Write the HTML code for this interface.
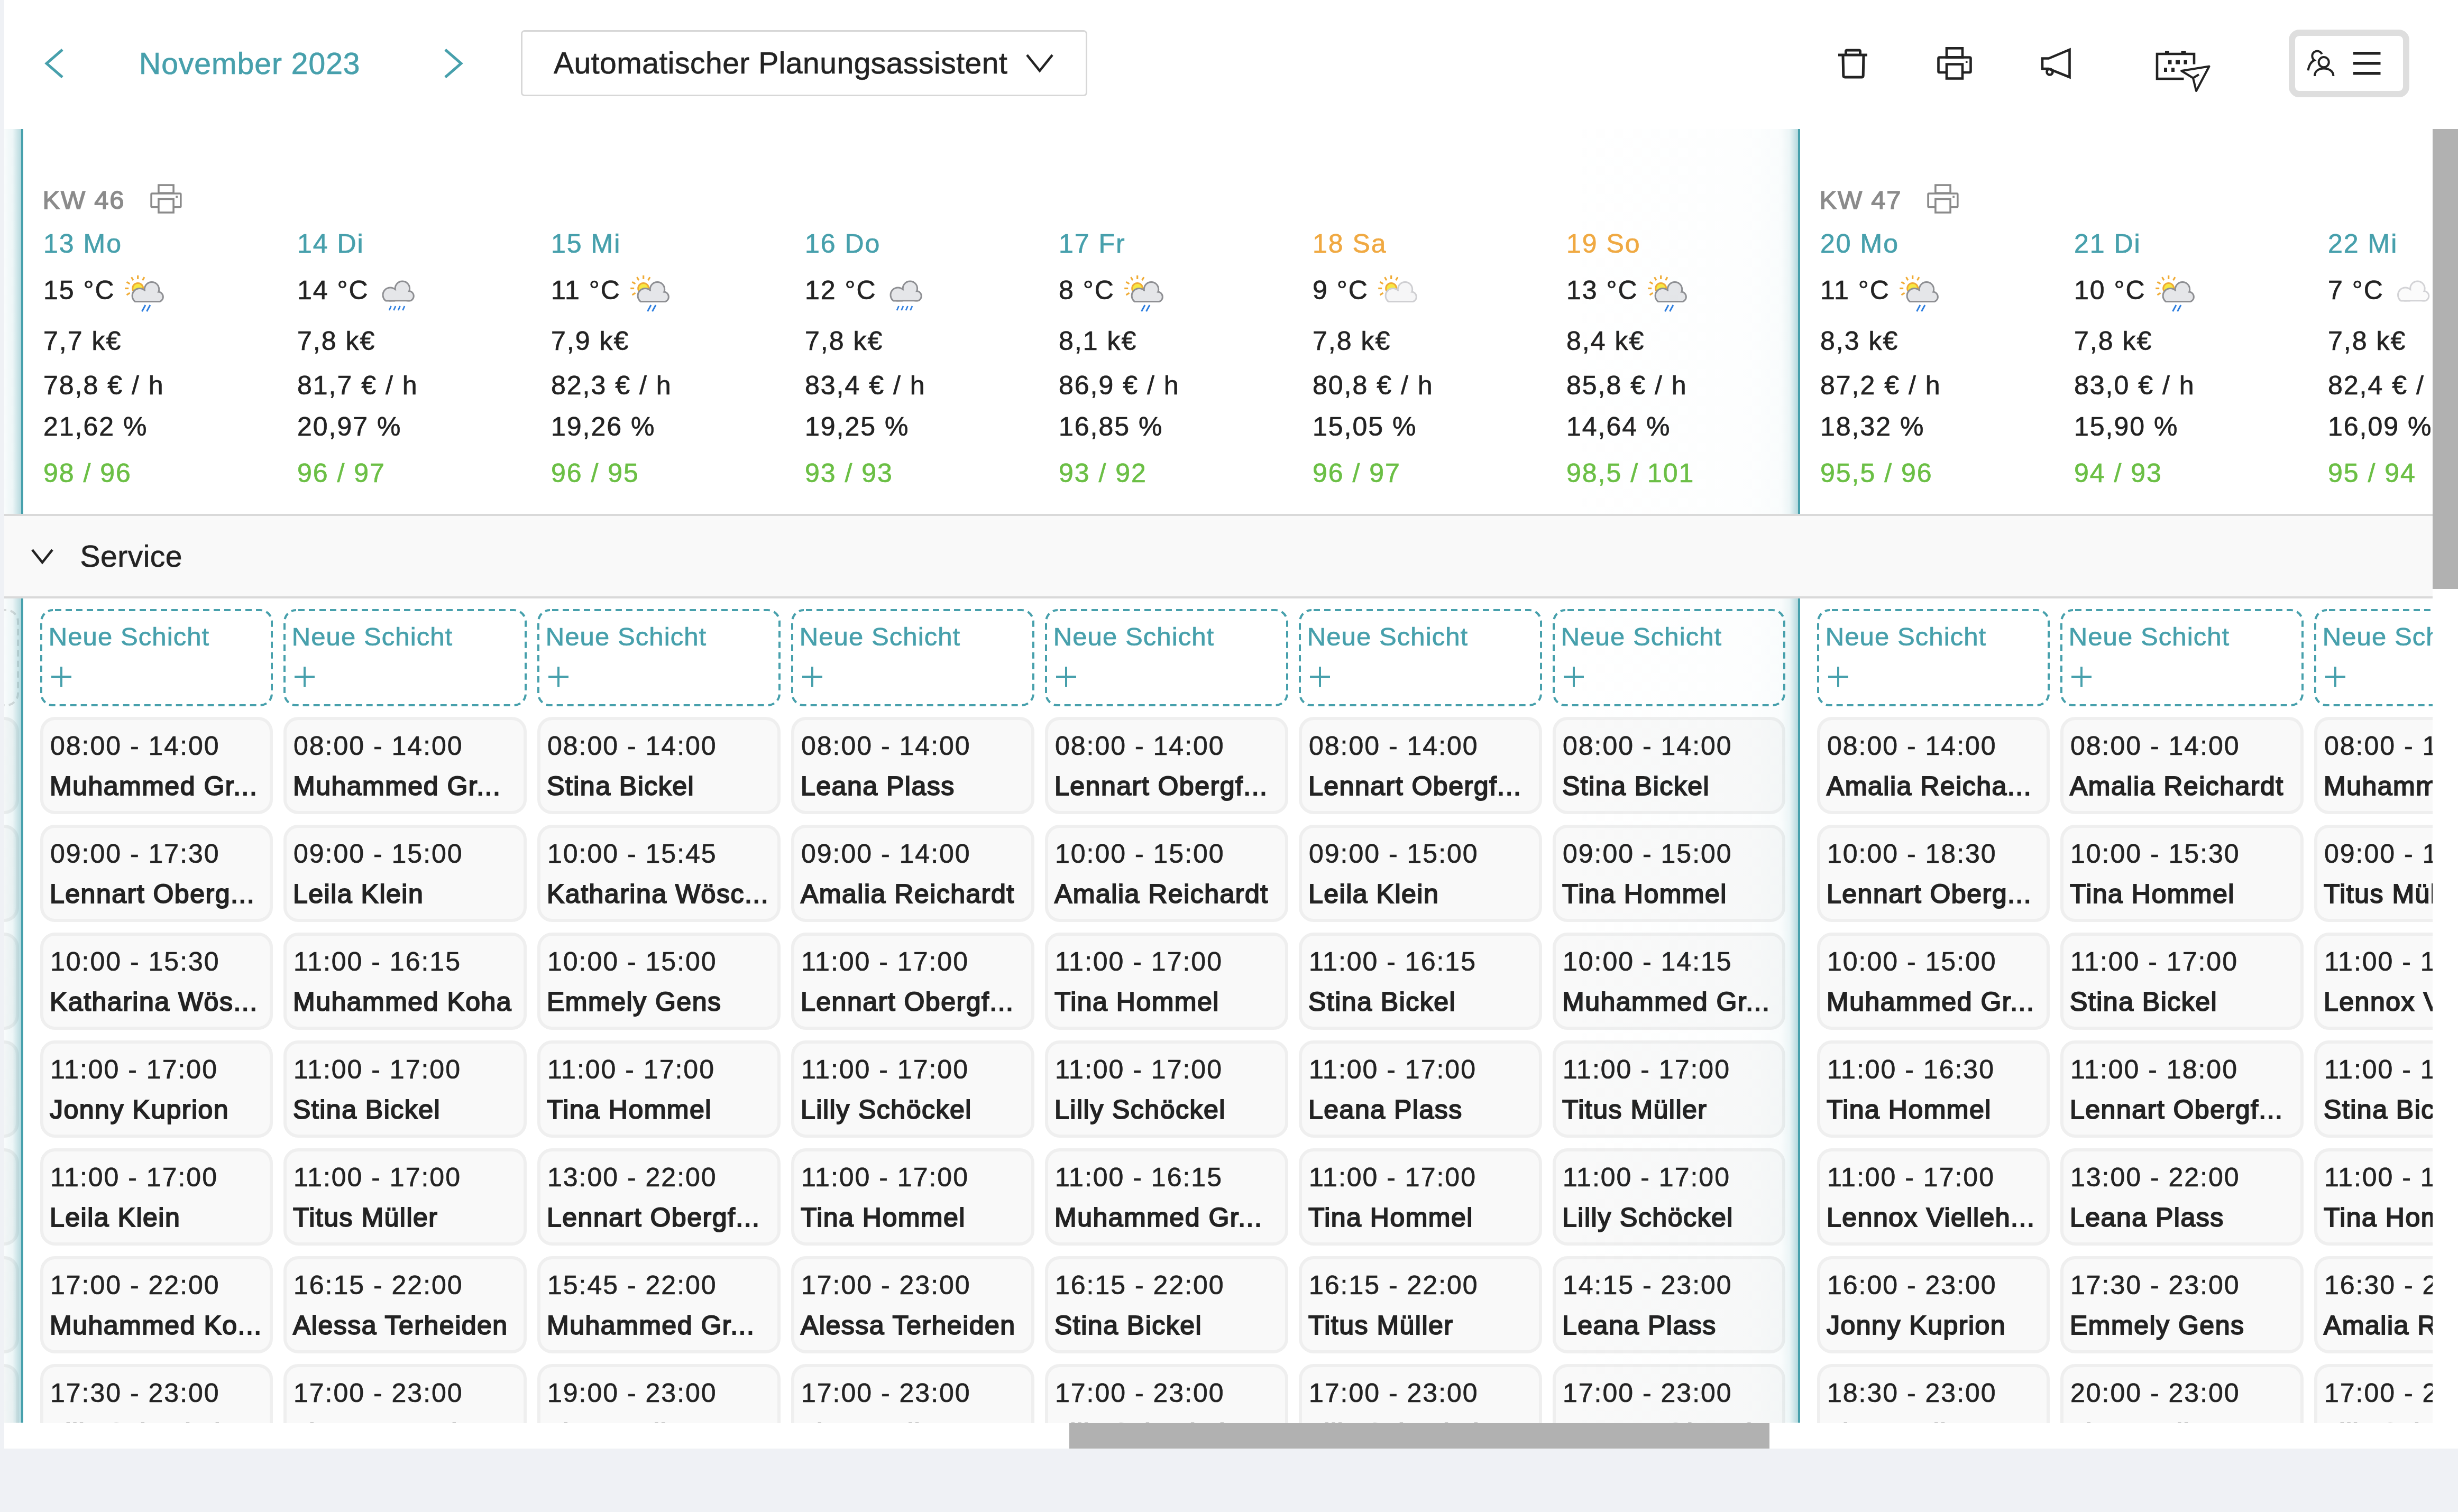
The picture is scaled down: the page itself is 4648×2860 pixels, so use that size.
<!DOCTYPE html>
<html><head><meta charset="utf-8"><style>
html,body{margin:0;padding:0;}
body{width:4648px;height:2860px;background:#eff1f5;position:relative;overflow:hidden;font-family:"Liberation Sans",sans-serif;}
.tx{position:absolute;white-space:nowrap;-webkit-text-stroke-width:0.7px;}
.abs{position:absolute;}
#app{position:absolute;left:8px;top:0;width:4640px;height:2740px;background:#fff;}
#clip{position:absolute;left:8px;top:244px;width:4592px;height:2448px;overflow:hidden;background:#fff;}
.card{position:absolute;box-sizing:border-box;height:184px;background:#f9f9f9;border:6px solid #efefef;border-radius:28px;overflow:hidden;}
.new{position:absolute;box-sizing:border-box;height:184px;border:4px dashed #47a0ac;border-radius:30px;overflow:hidden;}
.newg{position:absolute;box-sizing:border-box;height:184px;border:4px dashed #dcdcdc;border-radius:30px;}
.card .tx,.new .tx{position:absolute;}
</style></head><body>
<div id="app"></div>

<svg class="abs" style="left:80px;top:88px" width="46" height="64" viewBox="0 0 46 64"><polyline points="38,6 8,32 38,58" fill="none" stroke="#47a0ac" stroke-width="5"/></svg>
<div class="tx" style="left:263.0px;top:91.5px;font-size:57px;line-height:57px;letter-spacing:1px;color:#47a0ac;font-weight:normal;">November 2023</div>
<svg class="abs" style="left:834px;top:88px" width="46" height="64" viewBox="0 0 46 64"><polyline points="8,6 38,32 8,58" fill="none" stroke="#47a0ac" stroke-width="5"/></svg>
<div class="abs" style="left:985px;top:57px;width:1071px;height:125px;box-sizing:border-box;border:3px solid #d7d7d7;border-radius:7px;background:#fff"></div>
<div class="tx" style="left:1047.0px;top:91.0px;font-size:57px;line-height:57px;letter-spacing:0.5px;color:#232323;font-weight:normal;">Automatischer Planungsassistent</div>
<svg class="abs" style="left:1938px;top:100px" width="56" height="40" viewBox="0 0 56 40"><polyline points="4,4 28,34 52,4" fill="none" stroke="#232323" stroke-width="4.5"/></svg>
<svg class="abs" style="left:3470px;top:86px" width="68" height="68" viewBox="0 0 68 68" fill="none" stroke="#232323" stroke-width="5">
<line x1="6" y1="18" x2="61" y2="18"/>
<path d="M20.5,18 V11.5 Q20.5,9 23,9 H45 Q47.5,9 47.5,11.5 V18"/>
<path d="M15,18 L15.8,57 Q15.8,60 18.8,60 H50.2 Q53.2,60 53.2,57 L54,18"/>
</svg>
<svg class="abs" style="left:3658px;top:84px" width="76" height="72" viewBox="0 0 76 72" fill="none" stroke="#232323" stroke-width="4.6">
<rect x="23" y="7.3" width="30" height="17"/>
<path d="M23,53 H9.5 Q7.5,53 7.5,51 V26.5 Q7.5,24.5 9.5,24.5 H66.5 Q68.5,24.5 68.5,26.5 V51 Q68.5,53 66.5,53 H53"/>
<rect x="23" y="37.5" width="30" height="27"/>
<rect x="59" y="31.5" width="3.5" height="3.5" fill="#232323" stroke="none"/>
</svg>
<svg class="abs" style="left:3854px;top:86px" width="68" height="68" viewBox="0 0 68 68" fill="none" stroke="#232323" stroke-width="4.6">
<path d="M8,24.5 H20 L59.5,8 V60 L20,44 H8 Z"/>
<circle cx="22" cy="50" r="5.5"/>
</svg>
<svg class="abs" style="left:4070px;top:90px" width="116" height="90" viewBox="0 0 116 90" fill="none" stroke="#232323">
<path d="M59.5,59 H9 V12 H79 V31.5" stroke-width="4.6"/>
<rect x="24" y="6" width="8" height="6" fill="#232323" stroke="none"/>
<rect x="54.5" y="6" width="9" height="6" fill="#232323" stroke="none"/>
<rect x="30" y="23.5" width="6.5" height="8" fill="#232323" stroke="none"/>
<rect x="44" y="23.5" width="8" height="8" fill="#232323" stroke="none"/>
<rect x="59.5" y="23.5" width="6.5" height="8" fill="#232323" stroke="none"/>
<rect x="22" y="38" width="6" height="8" fill="#232323" stroke="none"/>
<rect x="36" y="38" width="6" height="8" fill="#232323" stroke="none"/>
<path d="M55,44 L107.5,35.5 L83,82 L77,57.5 Z" stroke-width="4" stroke-linejoin="round"/>
<line x1="77" y1="57.5" x2="88" y2="51" stroke-width="4"/>
</svg>
<div class="abs" style="left:4328px;top:56px;width:228px;height:128px;box-sizing:border-box;border:12px solid #dedede;border-radius:20px;background:#fff"></div>
<svg class="abs" style="left:4358px;top:90px" width="60" height="60" viewBox="0 0 60 60" fill="none" stroke="#232323" stroke-width="4">
<path d="M32.6,12.4 A9.5,9.5 0 1 0 18.5,23.9 Q9,28 6.5,43.3"/>
<circle cx="36.2" cy="27.6" r="9.6"/>
<path d="M18.9,54 C18.9,44 27,39.5 36.2,39.5 C45.4,39.5 54.4,44 54.4,54"/>
</svg>
<svg class="abs" style="left:4448px;top:94px" width="56" height="52" viewBox="0 0 56 52" fill="#232323">
<rect x="2" y="4" width="51.5" height="5.5"/><rect x="2" y="23" width="51.5" height="5.5"/><rect x="2" y="42" width="51.5" height="5.5"/>
</svg>
<div id="clip">
<div class="abs" style="left:0;top:728px;width:4592px;height:4px;background:#d9d9d9"></div>
<div class="abs" style="left:0;top:732px;width:4592px;height:152px;background:#f9f9f9"></div>
<div class="abs" style="left:0;top:884px;width:4592px;height:4px;background:#d9d9d9"></div>
<svg class="abs" style="left:48px;top:788px" width="48" height="40" viewBox="0 0 48 40"><polyline points="5,8 24,32 43,8" fill="none" stroke="#232323" stroke-width="4.5"/></svg>
<div class="tx" style="left:143.5px;top:779.7px;font-size:57px;line-height:57px;letter-spacing:0.5px;color:#232323;font-weight:normal;">Service</div>
<div class="tx" style="left:74.0px;top:191.7px;font-size:50px;line-height:50px;letter-spacing:2.0px;color:#47a0ac;font-weight:normal;">13 Mo</div>
<div class="tx" style="left:74.0px;top:279.7px;font-size:50px;line-height:50px;letter-spacing:2.0px;color:#232323;font-weight:normal;">15 °C</div>
<svg class="abs" style="left:222px;top:274px" width="84" height="80" viewBox="0 0 84 80">
<g stroke="#f0ab35" stroke-width="3.2"><line x1="39.5" y1="12.3" x2="43.0" y2="6.3"/><line x1="30.7" y1="10.0" x2="30.7" y2="3.0"/><line x1="22.0" y1="12.3" x2="18.5" y2="6.3"/><line x1="15.5" y1="18.8" x2="9.5" y2="15.3"/><line x1="13.2" y1="27.5" x2="6.2" y2="27.5"/><line x1="15.5" y1="36.2" x2="9.5" y2="39.8"/></g><circle cx="30.7" cy="27.5" r="10" fill="#f7e843" stroke="#f0ab35" stroke-width="3"/>
<g transform="translate(18.6,14)"><defs><clipPath id="co1"><rect x="-5" y="-5" width="80" height="45"/></clipPath><clipPath id="ci1"><rect x="-5" y="-5" width="80" height="42"/></clipPath></defs><g clip-path="url(#co1)" fill="#8e8f93" stroke="#8e8f93" stroke-width="6"><circle cx="15.5" cy="27.5" r="12.5"/><circle cx="38.4" cy="15.2" r="12.2"/><circle cx="50.3" cy="29.5" r="8"/><rect x="15.5" y="24" width="34.8" height="13"/><rect x="23" y="19" width="17" height="12"/></g><g clip-path="url(#ci1)" fill="#e5e6e9"><circle cx="15.5" cy="27.5" r="12.5"/><circle cx="38.4" cy="15.2" r="12.2"/><circle cx="50.3" cy="29.5" r="8"/><rect x="15.5" y="24" width="34.8" height="13"/><rect x="23" y="19" width="17" height="12"/></g></g>
<g stroke="#2f7fe0" stroke-width="3"><line x1="38.5" y1="71" x2="45" y2="59"/><line x1="47.5" y1="71" x2="54" y2="59"/></g>
</svg>
<div class="tx" style="left:74.0px;top:375.9px;font-size:50px;line-height:50px;letter-spacing:2.0px;color:#232323;font-weight:normal;">7,7 k€</div>
<div class="tx" style="left:74.0px;top:459.5px;font-size:50px;line-height:50px;letter-spacing:2.0px;color:#232323;font-weight:normal;">78,8 € / h</div>
<div class="tx" style="left:74.0px;top:537.9px;font-size:50px;line-height:50px;letter-spacing:2.0px;color:#232323;font-weight:normal;">21,62 %</div>
<div class="tx" style="left:74.0px;top:625.9px;font-size:50px;line-height:50px;letter-spacing:2.0px;color:#6bbf45;font-weight:normal;">98 / 96</div>
<div class="tx" style="left:554.0px;top:191.7px;font-size:50px;line-height:50px;letter-spacing:2.0px;color:#47a0ac;font-weight:normal;">14 Di</div>
<div class="tx" style="left:554.0px;top:279.7px;font-size:50px;line-height:50px;letter-spacing:2.0px;color:#232323;font-weight:normal;">14 °C</div>
<svg class="abs" style="left:702px;top:274px" width="84" height="80" viewBox="0 0 84 80">
<g transform="translate(12.5,12.5)"><defs><clipPath id="co2"><rect x="-5" y="-5" width="80" height="45"/></clipPath><clipPath id="ci2"><rect x="-5" y="-5" width="80" height="42"/></clipPath></defs><g clip-path="url(#co2)" fill="#8e8f93" stroke="#8e8f93" stroke-width="6"><circle cx="15.5" cy="27.5" r="12.5"/><circle cx="38.4" cy="15.2" r="12.2"/><circle cx="50.3" cy="29.5" r="8"/><rect x="15.5" y="24" width="34.8" height="13"/><rect x="23" y="19" width="17" height="12"/></g><g clip-path="url(#ci2)" fill="#e5e6e9"><circle cx="15.5" cy="27.5" r="12.5"/><circle cx="38.4" cy="15.2" r="12.2"/><circle cx="50.3" cy="29.5" r="8"/><rect x="15.5" y="24" width="34.8" height="13"/><rect x="23" y="19" width="17" height="12"/></g></g>
<g stroke="#2f7fe0" stroke-width="2.8"><line x1="26" y1="69" x2="29.5" y2="61"/><line x1="34.5" y1="69" x2="38" y2="61"/><line x1="43" y1="69" x2="46.5" y2="61"/><line x1="51.5" y1="69" x2="55" y2="61"/></g>
</svg>
<div class="tx" style="left:554.0px;top:375.9px;font-size:50px;line-height:50px;letter-spacing:2.0px;color:#232323;font-weight:normal;">7,8 k€</div>
<div class="tx" style="left:554.0px;top:459.5px;font-size:50px;line-height:50px;letter-spacing:2.0px;color:#232323;font-weight:normal;">81,7 € / h</div>
<div class="tx" style="left:554.0px;top:537.9px;font-size:50px;line-height:50px;letter-spacing:2.0px;color:#232323;font-weight:normal;">20,97 %</div>
<div class="tx" style="left:554.0px;top:625.9px;font-size:50px;line-height:50px;letter-spacing:2.0px;color:#6bbf45;font-weight:normal;">96 / 97</div>
<div class="tx" style="left:1034.0px;top:191.7px;font-size:50px;line-height:50px;letter-spacing:2.0px;color:#47a0ac;font-weight:normal;">15 Mi</div>
<div class="tx" style="left:1034.0px;top:279.7px;font-size:50px;line-height:50px;letter-spacing:2.0px;color:#232323;font-weight:normal;">11 °C</div>
<svg class="abs" style="left:1178px;top:274px" width="84" height="80" viewBox="0 0 84 80">
<g stroke="#f0ab35" stroke-width="3.2"><line x1="39.5" y1="12.3" x2="43.0" y2="6.3"/><line x1="30.7" y1="10.0" x2="30.7" y2="3.0"/><line x1="22.0" y1="12.3" x2="18.5" y2="6.3"/><line x1="15.5" y1="18.8" x2="9.5" y2="15.3"/><line x1="13.2" y1="27.5" x2="6.2" y2="27.5"/><line x1="15.5" y1="36.2" x2="9.5" y2="39.8"/></g><circle cx="30.7" cy="27.5" r="10" fill="#f7e843" stroke="#f0ab35" stroke-width="3"/>
<g transform="translate(18.6,14)"><defs><clipPath id="co3"><rect x="-5" y="-5" width="80" height="45"/></clipPath><clipPath id="ci3"><rect x="-5" y="-5" width="80" height="42"/></clipPath></defs><g clip-path="url(#co3)" fill="#8e8f93" stroke="#8e8f93" stroke-width="6"><circle cx="15.5" cy="27.5" r="12.5"/><circle cx="38.4" cy="15.2" r="12.2"/><circle cx="50.3" cy="29.5" r="8"/><rect x="15.5" y="24" width="34.8" height="13"/><rect x="23" y="19" width="17" height="12"/></g><g clip-path="url(#ci3)" fill="#e5e6e9"><circle cx="15.5" cy="27.5" r="12.5"/><circle cx="38.4" cy="15.2" r="12.2"/><circle cx="50.3" cy="29.5" r="8"/><rect x="15.5" y="24" width="34.8" height="13"/><rect x="23" y="19" width="17" height="12"/></g></g>
<g stroke="#2f7fe0" stroke-width="3"><line x1="38.5" y1="71" x2="45" y2="59"/><line x1="47.5" y1="71" x2="54" y2="59"/></g>
</svg>
<div class="tx" style="left:1034.0px;top:375.9px;font-size:50px;line-height:50px;letter-spacing:2.0px;color:#232323;font-weight:normal;">7,9 k€</div>
<div class="tx" style="left:1034.0px;top:459.5px;font-size:50px;line-height:50px;letter-spacing:2.0px;color:#232323;font-weight:normal;">82,3 € / h</div>
<div class="tx" style="left:1034.0px;top:537.9px;font-size:50px;line-height:50px;letter-spacing:2.0px;color:#232323;font-weight:normal;">19,26 %</div>
<div class="tx" style="left:1034.0px;top:625.9px;font-size:50px;line-height:50px;letter-spacing:2.0px;color:#6bbf45;font-weight:normal;">96 / 95</div>
<div class="tx" style="left:1514.0px;top:191.7px;font-size:50px;line-height:50px;letter-spacing:2.0px;color:#47a0ac;font-weight:normal;">16 Do</div>
<div class="tx" style="left:1514.0px;top:279.7px;font-size:50px;line-height:50px;letter-spacing:2.0px;color:#232323;font-weight:normal;">12 °C</div>
<svg class="abs" style="left:1662px;top:274px" width="84" height="80" viewBox="0 0 84 80">
<g transform="translate(12.5,12.5)"><defs><clipPath id="co4"><rect x="-5" y="-5" width="80" height="45"/></clipPath><clipPath id="ci4"><rect x="-5" y="-5" width="80" height="42"/></clipPath></defs><g clip-path="url(#co4)" fill="#8e8f93" stroke="#8e8f93" stroke-width="6"><circle cx="15.5" cy="27.5" r="12.5"/><circle cx="38.4" cy="15.2" r="12.2"/><circle cx="50.3" cy="29.5" r="8"/><rect x="15.5" y="24" width="34.8" height="13"/><rect x="23" y="19" width="17" height="12"/></g><g clip-path="url(#ci4)" fill="#e5e6e9"><circle cx="15.5" cy="27.5" r="12.5"/><circle cx="38.4" cy="15.2" r="12.2"/><circle cx="50.3" cy="29.5" r="8"/><rect x="15.5" y="24" width="34.8" height="13"/><rect x="23" y="19" width="17" height="12"/></g></g>
<g stroke="#2f7fe0" stroke-width="2.8"><line x1="26" y1="69" x2="29.5" y2="61"/><line x1="34.5" y1="69" x2="38" y2="61"/><line x1="43" y1="69" x2="46.5" y2="61"/><line x1="51.5" y1="69" x2="55" y2="61"/></g>
</svg>
<div class="tx" style="left:1514.0px;top:375.9px;font-size:50px;line-height:50px;letter-spacing:2.0px;color:#232323;font-weight:normal;">7,8 k€</div>
<div class="tx" style="left:1514.0px;top:459.5px;font-size:50px;line-height:50px;letter-spacing:2.0px;color:#232323;font-weight:normal;">83,4 € / h</div>
<div class="tx" style="left:1514.0px;top:537.9px;font-size:50px;line-height:50px;letter-spacing:2.0px;color:#232323;font-weight:normal;">19,25 %</div>
<div class="tx" style="left:1514.0px;top:625.9px;font-size:50px;line-height:50px;letter-spacing:2.0px;color:#6bbf45;font-weight:normal;">93 / 93</div>
<div class="tx" style="left:1994.0px;top:191.7px;font-size:50px;line-height:50px;letter-spacing:2.0px;color:#47a0ac;font-weight:normal;">17 Fr</div>
<div class="tx" style="left:1994.0px;top:279.7px;font-size:50px;line-height:50px;letter-spacing:2.0px;color:#232323;font-weight:normal;">8 °C</div>
<svg class="abs" style="left:2112px;top:274px" width="84" height="80" viewBox="0 0 84 80">
<g stroke="#f0ab35" stroke-width="3.2"><line x1="39.5" y1="12.3" x2="43.0" y2="6.3"/><line x1="30.7" y1="10.0" x2="30.7" y2="3.0"/><line x1="22.0" y1="12.3" x2="18.5" y2="6.3"/><line x1="15.5" y1="18.8" x2="9.5" y2="15.3"/><line x1="13.2" y1="27.5" x2="6.2" y2="27.5"/><line x1="15.5" y1="36.2" x2="9.5" y2="39.8"/></g><circle cx="30.7" cy="27.5" r="10" fill="#f7e843" stroke="#f0ab35" stroke-width="3"/>
<g transform="translate(18.6,14)"><defs><clipPath id="co5"><rect x="-5" y="-5" width="80" height="45"/></clipPath><clipPath id="ci5"><rect x="-5" y="-5" width="80" height="42"/></clipPath></defs><g clip-path="url(#co5)" fill="#8e8f93" stroke="#8e8f93" stroke-width="6"><circle cx="15.5" cy="27.5" r="12.5"/><circle cx="38.4" cy="15.2" r="12.2"/><circle cx="50.3" cy="29.5" r="8"/><rect x="15.5" y="24" width="34.8" height="13"/><rect x="23" y="19" width="17" height="12"/></g><g clip-path="url(#ci5)" fill="#e5e6e9"><circle cx="15.5" cy="27.5" r="12.5"/><circle cx="38.4" cy="15.2" r="12.2"/><circle cx="50.3" cy="29.5" r="8"/><rect x="15.5" y="24" width="34.8" height="13"/><rect x="23" y="19" width="17" height="12"/></g></g>
<g stroke="#2f7fe0" stroke-width="3"><line x1="38.5" y1="71" x2="45" y2="59"/><line x1="47.5" y1="71" x2="54" y2="59"/></g>
</svg>
<div class="tx" style="left:1994.0px;top:375.9px;font-size:50px;line-height:50px;letter-spacing:2.0px;color:#232323;font-weight:normal;">8,1 k€</div>
<div class="tx" style="left:1994.0px;top:459.5px;font-size:50px;line-height:50px;letter-spacing:2.0px;color:#232323;font-weight:normal;">86,9 € / h</div>
<div class="tx" style="left:1994.0px;top:537.9px;font-size:50px;line-height:50px;letter-spacing:2.0px;color:#232323;font-weight:normal;">16,85 %</div>
<div class="tx" style="left:1994.0px;top:625.9px;font-size:50px;line-height:50px;letter-spacing:2.0px;color:#6bbf45;font-weight:normal;">93 / 92</div>
<div class="tx" style="left:2474.0px;top:191.7px;font-size:50px;line-height:50px;letter-spacing:2.0px;color:#f0a942;font-weight:normal;">18 Sa</div>
<div class="tx" style="left:2474.0px;top:279.7px;font-size:50px;line-height:50px;letter-spacing:2.0px;color:#232323;font-weight:normal;">9 °C</div>
<svg class="abs" style="left:2592px;top:274px" width="84" height="80" viewBox="0 0 84 80">
<g stroke="#f0ab35" stroke-width="3.2"><line x1="39.5" y1="12.3" x2="43.0" y2="6.3"/><line x1="30.7" y1="10.0" x2="30.7" y2="3.0"/><line x1="22.0" y1="12.3" x2="18.5" y2="6.3"/><line x1="15.5" y1="18.8" x2="9.5" y2="15.3"/><line x1="13.2" y1="27.5" x2="6.2" y2="27.5"/><line x1="15.5" y1="36.2" x2="9.5" y2="39.8"/></g><circle cx="30.7" cy="27.5" r="10" fill="#f7e843" stroke="#f0ab35" stroke-width="3"/>
<g transform="translate(18.6,14)"><defs><clipPath id="co6"><rect x="-5" y="-5" width="80" height="45"/></clipPath><clipPath id="ci6"><rect x="-5" y="-5" width="80" height="42"/></clipPath></defs><g clip-path="url(#co6)" fill="#cfcfd2" stroke="#cfcfd2" stroke-width="6"><circle cx="15.5" cy="27.5" r="12.5"/><circle cx="38.4" cy="15.2" r="12.2"/><circle cx="50.3" cy="29.5" r="8"/><rect x="15.5" y="24" width="34.8" height="13"/><rect x="23" y="19" width="17" height="12"/></g><g clip-path="url(#ci6)" fill="#f6f6f7"><circle cx="15.5" cy="27.5" r="12.5"/><circle cx="38.4" cy="15.2" r="12.2"/><circle cx="50.3" cy="29.5" r="8"/><rect x="15.5" y="24" width="34.8" height="13"/><rect x="23" y="19" width="17" height="12"/></g></g>
</svg>
<div class="tx" style="left:2474.0px;top:375.9px;font-size:50px;line-height:50px;letter-spacing:2.0px;color:#232323;font-weight:normal;">7,8 k€</div>
<div class="tx" style="left:2474.0px;top:459.5px;font-size:50px;line-height:50px;letter-spacing:2.0px;color:#232323;font-weight:normal;">80,8 € / h</div>
<div class="tx" style="left:2474.0px;top:537.9px;font-size:50px;line-height:50px;letter-spacing:2.0px;color:#232323;font-weight:normal;">15,05 %</div>
<div class="tx" style="left:2474.0px;top:625.9px;font-size:50px;line-height:50px;letter-spacing:2.0px;color:#6bbf45;font-weight:normal;">96 / 97</div>
<div class="tx" style="left:2954.0px;top:191.7px;font-size:50px;line-height:50px;letter-spacing:2.0px;color:#f0a942;font-weight:normal;">19 So</div>
<div class="tx" style="left:2954.0px;top:279.7px;font-size:50px;line-height:50px;letter-spacing:2.0px;color:#232323;font-weight:normal;">13 °C</div>
<svg class="abs" style="left:3102px;top:274px" width="84" height="80" viewBox="0 0 84 80">
<g stroke="#f0ab35" stroke-width="3.2"><line x1="39.5" y1="12.3" x2="43.0" y2="6.3"/><line x1="30.7" y1="10.0" x2="30.7" y2="3.0"/><line x1="22.0" y1="12.3" x2="18.5" y2="6.3"/><line x1="15.5" y1="18.8" x2="9.5" y2="15.3"/><line x1="13.2" y1="27.5" x2="6.2" y2="27.5"/><line x1="15.5" y1="36.2" x2="9.5" y2="39.8"/></g><circle cx="30.7" cy="27.5" r="10" fill="#f7e843" stroke="#f0ab35" stroke-width="3"/>
<g transform="translate(18.6,14)"><defs><clipPath id="co7"><rect x="-5" y="-5" width="80" height="45"/></clipPath><clipPath id="ci7"><rect x="-5" y="-5" width="80" height="42"/></clipPath></defs><g clip-path="url(#co7)" fill="#8e8f93" stroke="#8e8f93" stroke-width="6"><circle cx="15.5" cy="27.5" r="12.5"/><circle cx="38.4" cy="15.2" r="12.2"/><circle cx="50.3" cy="29.5" r="8"/><rect x="15.5" y="24" width="34.8" height="13"/><rect x="23" y="19" width="17" height="12"/></g><g clip-path="url(#ci7)" fill="#e5e6e9"><circle cx="15.5" cy="27.5" r="12.5"/><circle cx="38.4" cy="15.2" r="12.2"/><circle cx="50.3" cy="29.5" r="8"/><rect x="15.5" y="24" width="34.8" height="13"/><rect x="23" y="19" width="17" height="12"/></g></g>
<g stroke="#2f7fe0" stroke-width="3"><line x1="38.5" y1="71" x2="45" y2="59"/><line x1="47.5" y1="71" x2="54" y2="59"/></g>
</svg>
<div class="tx" style="left:2954.0px;top:375.9px;font-size:50px;line-height:50px;letter-spacing:2.0px;color:#232323;font-weight:normal;">8,4 k€</div>
<div class="tx" style="left:2954.0px;top:459.5px;font-size:50px;line-height:50px;letter-spacing:2.0px;color:#232323;font-weight:normal;">85,8 € / h</div>
<div class="tx" style="left:2954.0px;top:537.9px;font-size:50px;line-height:50px;letter-spacing:2.0px;color:#232323;font-weight:normal;">14,64 %</div>
<div class="tx" style="left:2954.0px;top:625.9px;font-size:50px;line-height:50px;letter-spacing:2.0px;color:#6bbf45;font-weight:normal;">98,5 / 101</div>
<div class="tx" style="left:3434.0px;top:191.7px;font-size:50px;line-height:50px;letter-spacing:2.0px;color:#47a0ac;font-weight:normal;">20 Mo</div>
<div class="tx" style="left:3434.0px;top:279.7px;font-size:50px;line-height:50px;letter-spacing:2.0px;color:#232323;font-weight:normal;">11 °C</div>
<svg class="abs" style="left:3578px;top:274px" width="84" height="80" viewBox="0 0 84 80">
<g stroke="#f0ab35" stroke-width="3.2"><line x1="39.5" y1="12.3" x2="43.0" y2="6.3"/><line x1="30.7" y1="10.0" x2="30.7" y2="3.0"/><line x1="22.0" y1="12.3" x2="18.5" y2="6.3"/><line x1="15.5" y1="18.8" x2="9.5" y2="15.3"/><line x1="13.2" y1="27.5" x2="6.2" y2="27.5"/><line x1="15.5" y1="36.2" x2="9.5" y2="39.8"/></g><circle cx="30.7" cy="27.5" r="10" fill="#f7e843" stroke="#f0ab35" stroke-width="3"/>
<g transform="translate(18.6,14)"><defs><clipPath id="co8"><rect x="-5" y="-5" width="80" height="45"/></clipPath><clipPath id="ci8"><rect x="-5" y="-5" width="80" height="42"/></clipPath></defs><g clip-path="url(#co8)" fill="#8e8f93" stroke="#8e8f93" stroke-width="6"><circle cx="15.5" cy="27.5" r="12.5"/><circle cx="38.4" cy="15.2" r="12.2"/><circle cx="50.3" cy="29.5" r="8"/><rect x="15.5" y="24" width="34.8" height="13"/><rect x="23" y="19" width="17" height="12"/></g><g clip-path="url(#ci8)" fill="#e5e6e9"><circle cx="15.5" cy="27.5" r="12.5"/><circle cx="38.4" cy="15.2" r="12.2"/><circle cx="50.3" cy="29.5" r="8"/><rect x="15.5" y="24" width="34.8" height="13"/><rect x="23" y="19" width="17" height="12"/></g></g>
<g stroke="#2f7fe0" stroke-width="3"><line x1="38.5" y1="71" x2="45" y2="59"/><line x1="47.5" y1="71" x2="54" y2="59"/></g>
</svg>
<div class="tx" style="left:3434.0px;top:375.9px;font-size:50px;line-height:50px;letter-spacing:2.0px;color:#232323;font-weight:normal;">8,3 k€</div>
<div class="tx" style="left:3434.0px;top:459.5px;font-size:50px;line-height:50px;letter-spacing:2.0px;color:#232323;font-weight:normal;">87,2 € / h</div>
<div class="tx" style="left:3434.0px;top:537.9px;font-size:50px;line-height:50px;letter-spacing:2.0px;color:#232323;font-weight:normal;">18,32 %</div>
<div class="tx" style="left:3434.0px;top:625.9px;font-size:50px;line-height:50px;letter-spacing:2.0px;color:#6bbf45;font-weight:normal;">95,5 / 96</div>
<div class="tx" style="left:3914.0px;top:191.7px;font-size:50px;line-height:50px;letter-spacing:2.0px;color:#47a0ac;font-weight:normal;">21 Di</div>
<div class="tx" style="left:3914.0px;top:279.7px;font-size:50px;line-height:50px;letter-spacing:2.0px;color:#232323;font-weight:normal;">10 °C</div>
<svg class="abs" style="left:4062px;top:274px" width="84" height="80" viewBox="0 0 84 80">
<g stroke="#f0ab35" stroke-width="3.2"><line x1="39.5" y1="12.3" x2="43.0" y2="6.3"/><line x1="30.7" y1="10.0" x2="30.7" y2="3.0"/><line x1="22.0" y1="12.3" x2="18.5" y2="6.3"/><line x1="15.5" y1="18.8" x2="9.5" y2="15.3"/><line x1="13.2" y1="27.5" x2="6.2" y2="27.5"/><line x1="15.5" y1="36.2" x2="9.5" y2="39.8"/></g><circle cx="30.7" cy="27.5" r="10" fill="#f7e843" stroke="#f0ab35" stroke-width="3"/>
<g transform="translate(18.6,14)"><defs><clipPath id="co9"><rect x="-5" y="-5" width="80" height="45"/></clipPath><clipPath id="ci9"><rect x="-5" y="-5" width="80" height="42"/></clipPath></defs><g clip-path="url(#co9)" fill="#8e8f93" stroke="#8e8f93" stroke-width="6"><circle cx="15.5" cy="27.5" r="12.5"/><circle cx="38.4" cy="15.2" r="12.2"/><circle cx="50.3" cy="29.5" r="8"/><rect x="15.5" y="24" width="34.8" height="13"/><rect x="23" y="19" width="17" height="12"/></g><g clip-path="url(#ci9)" fill="#e5e6e9"><circle cx="15.5" cy="27.5" r="12.5"/><circle cx="38.4" cy="15.2" r="12.2"/><circle cx="50.3" cy="29.5" r="8"/><rect x="15.5" y="24" width="34.8" height="13"/><rect x="23" y="19" width="17" height="12"/></g></g>
<g stroke="#2f7fe0" stroke-width="3"><line x1="38.5" y1="71" x2="45" y2="59"/><line x1="47.5" y1="71" x2="54" y2="59"/></g>
</svg>
<div class="tx" style="left:3914.0px;top:375.9px;font-size:50px;line-height:50px;letter-spacing:2.0px;color:#232323;font-weight:normal;">7,8 k€</div>
<div class="tx" style="left:3914.0px;top:459.5px;font-size:50px;line-height:50px;letter-spacing:2.0px;color:#232323;font-weight:normal;">83,0 € / h</div>
<div class="tx" style="left:3914.0px;top:537.9px;font-size:50px;line-height:50px;letter-spacing:2.0px;color:#232323;font-weight:normal;">15,90 %</div>
<div class="tx" style="left:3914.0px;top:625.9px;font-size:50px;line-height:50px;letter-spacing:2.0px;color:#6bbf45;font-weight:normal;">94 / 93</div>
<div class="tx" style="left:4394.0px;top:191.7px;font-size:50px;line-height:50px;letter-spacing:2.0px;color:#47a0ac;font-weight:normal;">22 Mi</div>
<div class="tx" style="left:4394.0px;top:279.7px;font-size:50px;line-height:50px;letter-spacing:2.0px;color:#232323;font-weight:normal;">7 °C</div>
<svg class="abs" style="left:4512px;top:274px" width="84" height="80" viewBox="0 0 84 80">
<g transform="translate(13,12.5)"><defs><clipPath id="co10"><rect x="-5" y="-5" width="80" height="45"/></clipPath><clipPath id="ci10"><rect x="-5" y="-5" width="80" height="42"/></clipPath></defs><g clip-path="url(#co10)" fill="#d3d3d6" stroke="#d3d3d6" stroke-width="6"><circle cx="15.5" cy="27.5" r="12.5"/><circle cx="38.4" cy="15.2" r="12.2"/><circle cx="50.3" cy="29.5" r="8"/><rect x="15.5" y="24" width="34.8" height="13"/><rect x="23" y="19" width="17" height="12"/></g><g clip-path="url(#ci10)" fill="#fbfbfb"><circle cx="15.5" cy="27.5" r="12.5"/><circle cx="38.4" cy="15.2" r="12.2"/><circle cx="50.3" cy="29.5" r="8"/><rect x="15.5" y="24" width="34.8" height="13"/><rect x="23" y="19" width="17" height="12"/></g></g>
</svg>
<div class="tx" style="left:4394.0px;top:375.9px;font-size:50px;line-height:50px;letter-spacing:2.0px;color:#232323;font-weight:normal;">7,8 k€</div>
<div class="tx" style="left:4394.0px;top:459.5px;font-size:50px;line-height:50px;letter-spacing:2.0px;color:#232323;font-weight:normal;">82,4 € / h</div>
<div class="tx" style="left:4394.0px;top:537.9px;font-size:50px;line-height:50px;letter-spacing:2.0px;color:#232323;font-weight:normal;">16,09 %</div>
<div class="tx" style="left:4394.0px;top:625.9px;font-size:50px;line-height:50px;letter-spacing:2.0px;color:#6bbf45;font-weight:normal;">95 / 94</div>
<div class="tx" style="left:72.6px;top:110.2px;font-size:49px;line-height:49px;letter-spacing:1.7px;color:#8b8b8b;font-weight:normal;-webkit-text-stroke:1.5px #8b8b8b;">KW 46</div>
<svg class="abs" style="left:276px;top:100px" width="64" height="64" viewBox="0 0 64 64" fill="none" stroke="#8b8b8b" stroke-width="3.6">
<rect x="15.9" y="6.1" width="28.2" height="15"/>
<path d="M15.9,47.7 H3.6 Q2.1,47.7 2.1,46.2 V23.5 Q2.1,22 3.6,22 H56.3 Q57.8,22 57.8,23.5 V46.2 Q57.8,47.7 56.3,47.7 H44.1"/>
<rect x="15.9" y="32.4" width="28.2" height="25.6"/>
<rect x="48.3" y="26.3" width="3.7" height="3.7" fill="#8b8b8b" stroke="none"/>
</svg>
<div class="tx" style="left:3432.6px;top:110.2px;font-size:49px;line-height:49px;letter-spacing:1.7px;color:#8b8b8b;font-weight:normal;-webkit-text-stroke:1.5px #8b8b8b;">KW 47</div>
<svg class="abs" style="left:3636px;top:100px" width="64" height="64" viewBox="0 0 64 64" fill="none" stroke="#8b8b8b" stroke-width="3.6">
<rect x="15.9" y="6.1" width="28.2" height="15"/>
<path d="M15.9,47.7 H3.6 Q2.1,47.7 2.1,46.2 V23.5 Q2.1,22 3.6,22 H56.3 Q57.8,22 57.8,23.5 V46.2 Q57.8,47.7 56.3,47.7 H44.1"/>
<rect x="15.9" y="32.4" width="28.2" height="25.6"/>
<rect x="48.3" y="26.3" width="3.7" height="3.7" fill="#8b8b8b" stroke="none"/>
</svg>
<svg class="abs" style="left:-412px;top:908px" width="440" height="184" viewBox="0 0 440 184"><rect x="2" y="2" width="436" height="180" rx="22" ry="22" fill="none" stroke="#dcdcdc" stroke-width="4" stroke-dasharray="12 8"/></svg>
<div class="card" style="left:-412px;top:1112px;width:440px"></div>
<div class="card" style="left:-412px;top:1316px;width:440px"></div>
<div class="card" style="left:-412px;top:1520px;width:440px"></div>
<div class="card" style="left:-412px;top:1724px;width:440px"></div>
<div class="card" style="left:-412px;top:1928px;width:440px"></div>
<div class="card" style="left:-412px;top:2132px;width:440px"></div>
<div class="card" style="left:-412px;top:2336px;width:440px"></div>
<svg class="abs" style="left:68px;top:908px" width="440" height="184" viewBox="0 0 440 184"><rect x="2" y="2" width="436" height="180" rx="22" ry="22" fill="none" stroke="#47a0ac" stroke-width="4" stroke-dasharray="12 8" stroke-dashoffset="-4"/></svg>
<div class="tx" style="left:83.7px;top:936.0px;font-size:49px;line-height:49px;letter-spacing:1.1px;color:#47a0ac">Neue Schicht</div>
<svg class="abs" style="left:88px;top:1016px" width="40" height="40" viewBox="0 0 40 40"><path d="M20,1 V39 M1,20 H39" stroke="#47a0ac" stroke-width="4"/></svg>
<div class="card" style="left:68px;top:1112px;width:440px"><div class="tx" style="left:13px;top:24.0px;font-size:50px;line-height:50px;letter-spacing:2.0px;color:#232323">08:00 - 14:00</div><div class="tx" style="left:12px;top:99.7px;font-size:50px;line-height:50px;letter-spacing:1.5px;color:#232323;-webkit-text-stroke:2px #232323">Muhammed Gr...</div></div>
<div class="card" style="left:68px;top:1316px;width:440px"><div class="tx" style="left:13px;top:24.0px;font-size:50px;line-height:50px;letter-spacing:2.0px;color:#232323">09:00 - 17:30</div><div class="tx" style="left:12px;top:99.7px;font-size:50px;line-height:50px;letter-spacing:1.5px;color:#232323;-webkit-text-stroke:2px #232323">Lennart Oberg...</div></div>
<div class="card" style="left:68px;top:1520px;width:440px"><div class="tx" style="left:13px;top:24.0px;font-size:50px;line-height:50px;letter-spacing:2.0px;color:#232323">10:00 - 15:30</div><div class="tx" style="left:12px;top:99.7px;font-size:50px;line-height:50px;letter-spacing:1.5px;color:#232323;-webkit-text-stroke:2px #232323">Katharina Wös...</div></div>
<div class="card" style="left:68px;top:1724px;width:440px"><div class="tx" style="left:13px;top:24.0px;font-size:50px;line-height:50px;letter-spacing:2.0px;color:#232323">11:00 - 17:00</div><div class="tx" style="left:12px;top:99.7px;font-size:50px;line-height:50px;letter-spacing:1.5px;color:#232323;-webkit-text-stroke:2px #232323">Jonny Kuprion</div></div>
<div class="card" style="left:68px;top:1928px;width:440px"><div class="tx" style="left:13px;top:24.0px;font-size:50px;line-height:50px;letter-spacing:2.0px;color:#232323">11:00 - 17:00</div><div class="tx" style="left:12px;top:99.7px;font-size:50px;line-height:50px;letter-spacing:1.5px;color:#232323;-webkit-text-stroke:2px #232323">Leila Klein</div></div>
<div class="card" style="left:68px;top:2132px;width:440px"><div class="tx" style="left:13px;top:24.0px;font-size:50px;line-height:50px;letter-spacing:2.0px;color:#232323">17:00 - 22:00</div><div class="tx" style="left:12px;top:99.7px;font-size:50px;line-height:50px;letter-spacing:1.5px;color:#232323;-webkit-text-stroke:2px #232323">Muhammed Ko...</div></div>
<div class="card" style="left:68px;top:2336px;width:440px"><div class="tx" style="left:13px;top:24.0px;font-size:50px;line-height:50px;letter-spacing:2.0px;color:#232323">17:30 - 23:00</div><div class="tx" style="left:12px;top:99.7px;font-size:50px;line-height:50px;letter-spacing:1.5px;color:#232323;-webkit-text-stroke:2px #232323">Lilly Schöckel</div></div>
<svg class="abs" style="left:528px;top:908px" width="460" height="184" viewBox="0 0 460 184"><rect x="2" y="2" width="456" height="180" rx="22" ry="22" fill="none" stroke="#47a0ac" stroke-width="4" stroke-dasharray="12 8" stroke-dashoffset="-4"/></svg>
<div class="tx" style="left:543.7px;top:936.0px;font-size:49px;line-height:49px;letter-spacing:1.1px;color:#47a0ac">Neue Schicht</div>
<svg class="abs" style="left:548px;top:1016px" width="40" height="40" viewBox="0 0 40 40"><path d="M20,1 V39 M1,20 H39" stroke="#47a0ac" stroke-width="4"/></svg>
<div class="card" style="left:528px;top:1112px;width:460px"><div class="tx" style="left:13px;top:24.0px;font-size:50px;line-height:50px;letter-spacing:2.0px;color:#232323">08:00 - 14:00</div><div class="tx" style="left:12px;top:99.7px;font-size:50px;line-height:50px;letter-spacing:1.5px;color:#232323;-webkit-text-stroke:2px #232323">Muhammed Gr...</div></div>
<div class="card" style="left:528px;top:1316px;width:460px"><div class="tx" style="left:13px;top:24.0px;font-size:50px;line-height:50px;letter-spacing:2.0px;color:#232323">09:00 - 15:00</div><div class="tx" style="left:12px;top:99.7px;font-size:50px;line-height:50px;letter-spacing:1.5px;color:#232323;-webkit-text-stroke:2px #232323">Leila Klein</div></div>
<div class="card" style="left:528px;top:1520px;width:460px"><div class="tx" style="left:13px;top:24.0px;font-size:50px;line-height:50px;letter-spacing:2.0px;color:#232323">11:00 - 16:15</div><div class="tx" style="left:12px;top:99.7px;font-size:50px;line-height:50px;letter-spacing:1.5px;color:#232323;-webkit-text-stroke:2px #232323">Muhammed Koha</div></div>
<div class="card" style="left:528px;top:1724px;width:460px"><div class="tx" style="left:13px;top:24.0px;font-size:50px;line-height:50px;letter-spacing:2.0px;color:#232323">11:00 - 17:00</div><div class="tx" style="left:12px;top:99.7px;font-size:50px;line-height:50px;letter-spacing:1.5px;color:#232323;-webkit-text-stroke:2px #232323">Stina Bickel</div></div>
<div class="card" style="left:528px;top:1928px;width:460px"><div class="tx" style="left:13px;top:24.0px;font-size:50px;line-height:50px;letter-spacing:2.0px;color:#232323">11:00 - 17:00</div><div class="tx" style="left:12px;top:99.7px;font-size:50px;line-height:50px;letter-spacing:1.5px;color:#232323;-webkit-text-stroke:2px #232323">Titus Müller</div></div>
<div class="card" style="left:528px;top:2132px;width:460px"><div class="tx" style="left:13px;top:24.0px;font-size:50px;line-height:50px;letter-spacing:2.0px;color:#232323">16:15 - 22:00</div><div class="tx" style="left:12px;top:99.7px;font-size:50px;line-height:50px;letter-spacing:1.5px;color:#232323;-webkit-text-stroke:2px #232323">Alessa Terheiden</div></div>
<div class="card" style="left:528px;top:2336px;width:460px"><div class="tx" style="left:13px;top:24.0px;font-size:50px;line-height:50px;letter-spacing:2.0px;color:#232323">17:00 - 23:00</div><div class="tx" style="left:12px;top:99.7px;font-size:50px;line-height:50px;letter-spacing:1.5px;color:#232323;-webkit-text-stroke:2px #232323">Tina Hommel</div></div>
<svg class="abs" style="left:1008px;top:908px" width="460" height="184" viewBox="0 0 460 184"><rect x="2" y="2" width="456" height="180" rx="22" ry="22" fill="none" stroke="#47a0ac" stroke-width="4" stroke-dasharray="12 8" stroke-dashoffset="-4"/></svg>
<div class="tx" style="left:1023.7px;top:936.0px;font-size:49px;line-height:49px;letter-spacing:1.1px;color:#47a0ac">Neue Schicht</div>
<svg class="abs" style="left:1028px;top:1016px" width="40" height="40" viewBox="0 0 40 40"><path d="M20,1 V39 M1,20 H39" stroke="#47a0ac" stroke-width="4"/></svg>
<div class="card" style="left:1008px;top:1112px;width:460px"><div class="tx" style="left:13px;top:24.0px;font-size:50px;line-height:50px;letter-spacing:2.0px;color:#232323">08:00 - 14:00</div><div class="tx" style="left:12px;top:99.7px;font-size:50px;line-height:50px;letter-spacing:1.5px;color:#232323;-webkit-text-stroke:2px #232323">Stina Bickel</div></div>
<div class="card" style="left:1008px;top:1316px;width:460px"><div class="tx" style="left:13px;top:24.0px;font-size:50px;line-height:50px;letter-spacing:2.0px;color:#232323">10:00 - 15:45</div><div class="tx" style="left:12px;top:99.7px;font-size:50px;line-height:50px;letter-spacing:1.5px;color:#232323;-webkit-text-stroke:2px #232323">Katharina Wösc...</div></div>
<div class="card" style="left:1008px;top:1520px;width:460px"><div class="tx" style="left:13px;top:24.0px;font-size:50px;line-height:50px;letter-spacing:2.0px;color:#232323">10:00 - 15:00</div><div class="tx" style="left:12px;top:99.7px;font-size:50px;line-height:50px;letter-spacing:1.5px;color:#232323;-webkit-text-stroke:2px #232323">Emmely Gens</div></div>
<div class="card" style="left:1008px;top:1724px;width:460px"><div class="tx" style="left:13px;top:24.0px;font-size:50px;line-height:50px;letter-spacing:2.0px;color:#232323">11:00 - 17:00</div><div class="tx" style="left:12px;top:99.7px;font-size:50px;line-height:50px;letter-spacing:1.5px;color:#232323;-webkit-text-stroke:2px #232323">Tina Hommel</div></div>
<div class="card" style="left:1008px;top:1928px;width:460px"><div class="tx" style="left:13px;top:24.0px;font-size:50px;line-height:50px;letter-spacing:2.0px;color:#232323">13:00 - 22:00</div><div class="tx" style="left:12px;top:99.7px;font-size:50px;line-height:50px;letter-spacing:1.5px;color:#232323;-webkit-text-stroke:2px #232323">Lennart Obergf...</div></div>
<div class="card" style="left:1008px;top:2132px;width:460px"><div class="tx" style="left:13px;top:24.0px;font-size:50px;line-height:50px;letter-spacing:2.0px;color:#232323">15:45 - 22:00</div><div class="tx" style="left:12px;top:99.7px;font-size:50px;line-height:50px;letter-spacing:1.5px;color:#232323;-webkit-text-stroke:2px #232323">Muhammed Gr...</div></div>
<div class="card" style="left:1008px;top:2336px;width:460px"><div class="tx" style="left:13px;top:24.0px;font-size:50px;line-height:50px;letter-spacing:2.0px;color:#232323">19:00 - 23:00</div><div class="tx" style="left:12px;top:99.7px;font-size:50px;line-height:50px;letter-spacing:1.5px;color:#232323;-webkit-text-stroke:2px #232323">Titus Müller</div></div>
<svg class="abs" style="left:1488px;top:908px" width="460" height="184" viewBox="0 0 460 184"><rect x="2" y="2" width="456" height="180" rx="22" ry="22" fill="none" stroke="#47a0ac" stroke-width="4" stroke-dasharray="12 8" stroke-dashoffset="-4"/></svg>
<div class="tx" style="left:1503.7px;top:936.0px;font-size:49px;line-height:49px;letter-spacing:1.1px;color:#47a0ac">Neue Schicht</div>
<svg class="abs" style="left:1508px;top:1016px" width="40" height="40" viewBox="0 0 40 40"><path d="M20,1 V39 M1,20 H39" stroke="#47a0ac" stroke-width="4"/></svg>
<div class="card" style="left:1488px;top:1112px;width:460px"><div class="tx" style="left:13px;top:24.0px;font-size:50px;line-height:50px;letter-spacing:2.0px;color:#232323">08:00 - 14:00</div><div class="tx" style="left:12px;top:99.7px;font-size:50px;line-height:50px;letter-spacing:1.5px;color:#232323;-webkit-text-stroke:2px #232323">Leana Plass</div></div>
<div class="card" style="left:1488px;top:1316px;width:460px"><div class="tx" style="left:13px;top:24.0px;font-size:50px;line-height:50px;letter-spacing:2.0px;color:#232323">09:00 - 14:00</div><div class="tx" style="left:12px;top:99.7px;font-size:50px;line-height:50px;letter-spacing:1.5px;color:#232323;-webkit-text-stroke:2px #232323">Amalia Reichardt</div></div>
<div class="card" style="left:1488px;top:1520px;width:460px"><div class="tx" style="left:13px;top:24.0px;font-size:50px;line-height:50px;letter-spacing:2.0px;color:#232323">11:00 - 17:00</div><div class="tx" style="left:12px;top:99.7px;font-size:50px;line-height:50px;letter-spacing:1.5px;color:#232323;-webkit-text-stroke:2px #232323">Lennart Obergf...</div></div>
<div class="card" style="left:1488px;top:1724px;width:460px"><div class="tx" style="left:13px;top:24.0px;font-size:50px;line-height:50px;letter-spacing:2.0px;color:#232323">11:00 - 17:00</div><div class="tx" style="left:12px;top:99.7px;font-size:50px;line-height:50px;letter-spacing:1.5px;color:#232323;-webkit-text-stroke:2px #232323">Lilly Schöckel</div></div>
<div class="card" style="left:1488px;top:1928px;width:460px"><div class="tx" style="left:13px;top:24.0px;font-size:50px;line-height:50px;letter-spacing:2.0px;color:#232323">11:00 - 17:00</div><div class="tx" style="left:12px;top:99.7px;font-size:50px;line-height:50px;letter-spacing:1.5px;color:#232323;-webkit-text-stroke:2px #232323">Tina Hommel</div></div>
<div class="card" style="left:1488px;top:2132px;width:460px"><div class="tx" style="left:13px;top:24.0px;font-size:50px;line-height:50px;letter-spacing:2.0px;color:#232323">17:00 - 23:00</div><div class="tx" style="left:12px;top:99.7px;font-size:50px;line-height:50px;letter-spacing:1.5px;color:#232323;-webkit-text-stroke:2px #232323">Alessa Terheiden</div></div>
<div class="card" style="left:1488px;top:2336px;width:460px"><div class="tx" style="left:13px;top:24.0px;font-size:50px;line-height:50px;letter-spacing:2.0px;color:#232323">17:00 - 23:00</div><div class="tx" style="left:12px;top:99.7px;font-size:50px;line-height:50px;letter-spacing:1.5px;color:#232323;-webkit-text-stroke:2px #232323">Titus Müller</div></div>
<svg class="abs" style="left:1968px;top:908px" width="460" height="184" viewBox="0 0 460 184"><rect x="2" y="2" width="456" height="180" rx="22" ry="22" fill="none" stroke="#47a0ac" stroke-width="4" stroke-dasharray="12 8" stroke-dashoffset="-4"/></svg>
<div class="tx" style="left:1983.7px;top:936.0px;font-size:49px;line-height:49px;letter-spacing:1.1px;color:#47a0ac">Neue Schicht</div>
<svg class="abs" style="left:1988px;top:1016px" width="40" height="40" viewBox="0 0 40 40"><path d="M20,1 V39 M1,20 H39" stroke="#47a0ac" stroke-width="4"/></svg>
<div class="card" style="left:1968px;top:1112px;width:460px"><div class="tx" style="left:13px;top:24.0px;font-size:50px;line-height:50px;letter-spacing:2.0px;color:#232323">08:00 - 14:00</div><div class="tx" style="left:12px;top:99.7px;font-size:50px;line-height:50px;letter-spacing:1.5px;color:#232323;-webkit-text-stroke:2px #232323">Lennart Obergf...</div></div>
<div class="card" style="left:1968px;top:1316px;width:460px"><div class="tx" style="left:13px;top:24.0px;font-size:50px;line-height:50px;letter-spacing:2.0px;color:#232323">10:00 - 15:00</div><div class="tx" style="left:12px;top:99.7px;font-size:50px;line-height:50px;letter-spacing:1.5px;color:#232323;-webkit-text-stroke:2px #232323">Amalia Reichardt</div></div>
<div class="card" style="left:1968px;top:1520px;width:460px"><div class="tx" style="left:13px;top:24.0px;font-size:50px;line-height:50px;letter-spacing:2.0px;color:#232323">11:00 - 17:00</div><div class="tx" style="left:12px;top:99.7px;font-size:50px;line-height:50px;letter-spacing:1.5px;color:#232323;-webkit-text-stroke:2px #232323">Tina Hommel</div></div>
<div class="card" style="left:1968px;top:1724px;width:460px"><div class="tx" style="left:13px;top:24.0px;font-size:50px;line-height:50px;letter-spacing:2.0px;color:#232323">11:00 - 17:00</div><div class="tx" style="left:12px;top:99.7px;font-size:50px;line-height:50px;letter-spacing:1.5px;color:#232323;-webkit-text-stroke:2px #232323">Lilly Schöckel</div></div>
<div class="card" style="left:1968px;top:1928px;width:460px"><div class="tx" style="left:13px;top:24.0px;font-size:50px;line-height:50px;letter-spacing:2.0px;color:#232323">11:00 - 16:15</div><div class="tx" style="left:12px;top:99.7px;font-size:50px;line-height:50px;letter-spacing:1.5px;color:#232323;-webkit-text-stroke:2px #232323">Muhammed Gr...</div></div>
<div class="card" style="left:1968px;top:2132px;width:460px"><div class="tx" style="left:13px;top:24.0px;font-size:50px;line-height:50px;letter-spacing:2.0px;color:#232323">16:15 - 22:00</div><div class="tx" style="left:12px;top:99.7px;font-size:50px;line-height:50px;letter-spacing:1.5px;color:#232323;-webkit-text-stroke:2px #232323">Stina Bickel</div></div>
<div class="card" style="left:1968px;top:2336px;width:460px"><div class="tx" style="left:13px;top:24.0px;font-size:50px;line-height:50px;letter-spacing:2.0px;color:#232323">17:00 - 23:00</div><div class="tx" style="left:12px;top:99.7px;font-size:50px;line-height:50px;letter-spacing:1.5px;color:#232323;-webkit-text-stroke:2px #232323">Lilly Schöckel</div></div>
<svg class="abs" style="left:2448px;top:908px" width="460" height="184" viewBox="0 0 460 184"><rect x="2" y="2" width="456" height="180" rx="22" ry="22" fill="none" stroke="#47a0ac" stroke-width="4" stroke-dasharray="12 8" stroke-dashoffset="-4"/></svg>
<div class="tx" style="left:2463.7px;top:936.0px;font-size:49px;line-height:49px;letter-spacing:1.1px;color:#47a0ac">Neue Schicht</div>
<svg class="abs" style="left:2468px;top:1016px" width="40" height="40" viewBox="0 0 40 40"><path d="M20,1 V39 M1,20 H39" stroke="#47a0ac" stroke-width="4"/></svg>
<div class="card" style="left:2448px;top:1112px;width:460px"><div class="tx" style="left:13px;top:24.0px;font-size:50px;line-height:50px;letter-spacing:2.0px;color:#232323">08:00 - 14:00</div><div class="tx" style="left:12px;top:99.7px;font-size:50px;line-height:50px;letter-spacing:1.5px;color:#232323;-webkit-text-stroke:2px #232323">Lennart Obergf...</div></div>
<div class="card" style="left:2448px;top:1316px;width:460px"><div class="tx" style="left:13px;top:24.0px;font-size:50px;line-height:50px;letter-spacing:2.0px;color:#232323">09:00 - 15:00</div><div class="tx" style="left:12px;top:99.7px;font-size:50px;line-height:50px;letter-spacing:1.5px;color:#232323;-webkit-text-stroke:2px #232323">Leila Klein</div></div>
<div class="card" style="left:2448px;top:1520px;width:460px"><div class="tx" style="left:13px;top:24.0px;font-size:50px;line-height:50px;letter-spacing:2.0px;color:#232323">11:00 - 16:15</div><div class="tx" style="left:12px;top:99.7px;font-size:50px;line-height:50px;letter-spacing:1.5px;color:#232323;-webkit-text-stroke:2px #232323">Stina Bickel</div></div>
<div class="card" style="left:2448px;top:1724px;width:460px"><div class="tx" style="left:13px;top:24.0px;font-size:50px;line-height:50px;letter-spacing:2.0px;color:#232323">11:00 - 17:00</div><div class="tx" style="left:12px;top:99.7px;font-size:50px;line-height:50px;letter-spacing:1.5px;color:#232323;-webkit-text-stroke:2px #232323">Leana Plass</div></div>
<div class="card" style="left:2448px;top:1928px;width:460px"><div class="tx" style="left:13px;top:24.0px;font-size:50px;line-height:50px;letter-spacing:2.0px;color:#232323">11:00 - 17:00</div><div class="tx" style="left:12px;top:99.7px;font-size:50px;line-height:50px;letter-spacing:1.5px;color:#232323;-webkit-text-stroke:2px #232323">Tina Hommel</div></div>
<div class="card" style="left:2448px;top:2132px;width:460px"><div class="tx" style="left:13px;top:24.0px;font-size:50px;line-height:50px;letter-spacing:2.0px;color:#232323">16:15 - 22:00</div><div class="tx" style="left:12px;top:99.7px;font-size:50px;line-height:50px;letter-spacing:1.5px;color:#232323;-webkit-text-stroke:2px #232323">Titus Müller</div></div>
<div class="card" style="left:2448px;top:2336px;width:460px"><div class="tx" style="left:13px;top:24.0px;font-size:50px;line-height:50px;letter-spacing:2.0px;color:#232323">17:00 - 23:00</div><div class="tx" style="left:12px;top:99.7px;font-size:50px;line-height:50px;letter-spacing:1.5px;color:#232323;-webkit-text-stroke:2px #232323">Lilly Schöckel</div></div>
<svg class="abs" style="left:2928px;top:908px" width="440" height="184" viewBox="0 0 440 184"><rect x="2" y="2" width="436" height="180" rx="22" ry="22" fill="none" stroke="#47a0ac" stroke-width="4" stroke-dasharray="12 8" stroke-dashoffset="-4"/></svg>
<div class="tx" style="left:2943.7px;top:936.0px;font-size:49px;line-height:49px;letter-spacing:1.1px;color:#47a0ac">Neue Schicht</div>
<svg class="abs" style="left:2948px;top:1016px" width="40" height="40" viewBox="0 0 40 40"><path d="M20,1 V39 M1,20 H39" stroke="#47a0ac" stroke-width="4"/></svg>
<div class="card" style="left:2928px;top:1112px;width:440px"><div class="tx" style="left:13px;top:24.0px;font-size:50px;line-height:50px;letter-spacing:2.0px;color:#232323">08:00 - 14:00</div><div class="tx" style="left:12px;top:99.7px;font-size:50px;line-height:50px;letter-spacing:1.5px;color:#232323;-webkit-text-stroke:2px #232323">Stina Bickel</div></div>
<div class="card" style="left:2928px;top:1316px;width:440px"><div class="tx" style="left:13px;top:24.0px;font-size:50px;line-height:50px;letter-spacing:2.0px;color:#232323">09:00 - 15:00</div><div class="tx" style="left:12px;top:99.7px;font-size:50px;line-height:50px;letter-spacing:1.5px;color:#232323;-webkit-text-stroke:2px #232323">Tina Hommel</div></div>
<div class="card" style="left:2928px;top:1520px;width:440px"><div class="tx" style="left:13px;top:24.0px;font-size:50px;line-height:50px;letter-spacing:2.0px;color:#232323">10:00 - 14:15</div><div class="tx" style="left:12px;top:99.7px;font-size:50px;line-height:50px;letter-spacing:1.5px;color:#232323;-webkit-text-stroke:2px #232323">Muhammed Gr...</div></div>
<div class="card" style="left:2928px;top:1724px;width:440px"><div class="tx" style="left:13px;top:24.0px;font-size:50px;line-height:50px;letter-spacing:2.0px;color:#232323">11:00 - 17:00</div><div class="tx" style="left:12px;top:99.7px;font-size:50px;line-height:50px;letter-spacing:1.5px;color:#232323;-webkit-text-stroke:2px #232323">Titus Müller</div></div>
<div class="card" style="left:2928px;top:1928px;width:440px"><div class="tx" style="left:13px;top:24.0px;font-size:50px;line-height:50px;letter-spacing:2.0px;color:#232323">11:00 - 17:00</div><div class="tx" style="left:12px;top:99.7px;font-size:50px;line-height:50px;letter-spacing:1.5px;color:#232323;-webkit-text-stroke:2px #232323">Lilly Schöckel</div></div>
<div class="card" style="left:2928px;top:2132px;width:440px"><div class="tx" style="left:13px;top:24.0px;font-size:50px;line-height:50px;letter-spacing:2.0px;color:#232323">14:15 - 23:00</div><div class="tx" style="left:12px;top:99.7px;font-size:50px;line-height:50px;letter-spacing:1.5px;color:#232323;-webkit-text-stroke:2px #232323">Leana Plass</div></div>
<div class="card" style="left:2928px;top:2336px;width:440px"><div class="tx" style="left:13px;top:24.0px;font-size:50px;line-height:50px;letter-spacing:2.0px;color:#232323">17:00 - 23:00</div><div class="tx" style="left:12px;top:99.7px;font-size:50px;line-height:50px;letter-spacing:1.5px;color:#232323;-webkit-text-stroke:2px #232323">Lennart Obergf...</div></div>
<svg class="abs" style="left:3428px;top:908px" width="440" height="184" viewBox="0 0 440 184"><rect x="2" y="2" width="436" height="180" rx="22" ry="22" fill="none" stroke="#47a0ac" stroke-width="4" stroke-dasharray="12 8" stroke-dashoffset="-4"/></svg>
<div class="tx" style="left:3443.7px;top:936.0px;font-size:49px;line-height:49px;letter-spacing:1.1px;color:#47a0ac">Neue Schicht</div>
<svg class="abs" style="left:3448px;top:1016px" width="40" height="40" viewBox="0 0 40 40"><path d="M20,1 V39 M1,20 H39" stroke="#47a0ac" stroke-width="4"/></svg>
<div class="card" style="left:3428px;top:1112px;width:440px"><div class="tx" style="left:13px;top:24.0px;font-size:50px;line-height:50px;letter-spacing:2.0px;color:#232323">08:00 - 14:00</div><div class="tx" style="left:12px;top:99.7px;font-size:50px;line-height:50px;letter-spacing:1.5px;color:#232323;-webkit-text-stroke:2px #232323">Amalia Reicha...</div></div>
<div class="card" style="left:3428px;top:1316px;width:440px"><div class="tx" style="left:13px;top:24.0px;font-size:50px;line-height:50px;letter-spacing:2.0px;color:#232323">10:00 - 18:30</div><div class="tx" style="left:12px;top:99.7px;font-size:50px;line-height:50px;letter-spacing:1.5px;color:#232323;-webkit-text-stroke:2px #232323">Lennart Oberg...</div></div>
<div class="card" style="left:3428px;top:1520px;width:440px"><div class="tx" style="left:13px;top:24.0px;font-size:50px;line-height:50px;letter-spacing:2.0px;color:#232323">10:00 - 15:00</div><div class="tx" style="left:12px;top:99.7px;font-size:50px;line-height:50px;letter-spacing:1.5px;color:#232323;-webkit-text-stroke:2px #232323">Muhammed Gr...</div></div>
<div class="card" style="left:3428px;top:1724px;width:440px"><div class="tx" style="left:13px;top:24.0px;font-size:50px;line-height:50px;letter-spacing:2.0px;color:#232323">11:00 - 16:30</div><div class="tx" style="left:12px;top:99.7px;font-size:50px;line-height:50px;letter-spacing:1.5px;color:#232323;-webkit-text-stroke:2px #232323">Tina Hommel</div></div>
<div class="card" style="left:3428px;top:1928px;width:440px"><div class="tx" style="left:13px;top:24.0px;font-size:50px;line-height:50px;letter-spacing:2.0px;color:#232323">11:00 - 17:00</div><div class="tx" style="left:12px;top:99.7px;font-size:50px;line-height:50px;letter-spacing:1.5px;color:#232323;-webkit-text-stroke:2px #232323">Lennox Vielleh...</div></div>
<div class="card" style="left:3428px;top:2132px;width:440px"><div class="tx" style="left:13px;top:24.0px;font-size:50px;line-height:50px;letter-spacing:2.0px;color:#232323">16:00 - 23:00</div><div class="tx" style="left:12px;top:99.7px;font-size:50px;line-height:50px;letter-spacing:1.5px;color:#232323;-webkit-text-stroke:2px #232323">Jonny Kuprion</div></div>
<div class="card" style="left:3428px;top:2336px;width:440px"><div class="tx" style="left:13px;top:24.0px;font-size:50px;line-height:50px;letter-spacing:2.0px;color:#232323">18:30 - 23:00</div><div class="tx" style="left:12px;top:99.7px;font-size:50px;line-height:50px;letter-spacing:1.5px;color:#232323;-webkit-text-stroke:2px #232323">Titus Müller</div></div>
<svg class="abs" style="left:3888px;top:908px" width="460" height="184" viewBox="0 0 460 184"><rect x="2" y="2" width="456" height="180" rx="22" ry="22" fill="none" stroke="#47a0ac" stroke-width="4" stroke-dasharray="12 8" stroke-dashoffset="-4"/></svg>
<div class="tx" style="left:3903.7px;top:936.0px;font-size:49px;line-height:49px;letter-spacing:1.1px;color:#47a0ac">Neue Schicht</div>
<svg class="abs" style="left:3908px;top:1016px" width="40" height="40" viewBox="0 0 40 40"><path d="M20,1 V39 M1,20 H39" stroke="#47a0ac" stroke-width="4"/></svg>
<div class="card" style="left:3888px;top:1112px;width:460px"><div class="tx" style="left:13px;top:24.0px;font-size:50px;line-height:50px;letter-spacing:2.0px;color:#232323">08:00 - 14:00</div><div class="tx" style="left:12px;top:99.7px;font-size:50px;line-height:50px;letter-spacing:1.5px;color:#232323;-webkit-text-stroke:2px #232323">Amalia Reichardt</div></div>
<div class="card" style="left:3888px;top:1316px;width:460px"><div class="tx" style="left:13px;top:24.0px;font-size:50px;line-height:50px;letter-spacing:2.0px;color:#232323">10:00 - 15:30</div><div class="tx" style="left:12px;top:99.7px;font-size:50px;line-height:50px;letter-spacing:1.5px;color:#232323;-webkit-text-stroke:2px #232323">Tina Hommel</div></div>
<div class="card" style="left:3888px;top:1520px;width:460px"><div class="tx" style="left:13px;top:24.0px;font-size:50px;line-height:50px;letter-spacing:2.0px;color:#232323">11:00 - 17:00</div><div class="tx" style="left:12px;top:99.7px;font-size:50px;line-height:50px;letter-spacing:1.5px;color:#232323;-webkit-text-stroke:2px #232323">Stina Bickel</div></div>
<div class="card" style="left:3888px;top:1724px;width:460px"><div class="tx" style="left:13px;top:24.0px;font-size:50px;line-height:50px;letter-spacing:2.0px;color:#232323">11:00 - 18:00</div><div class="tx" style="left:12px;top:99.7px;font-size:50px;line-height:50px;letter-spacing:1.5px;color:#232323;-webkit-text-stroke:2px #232323">Lennart Obergf...</div></div>
<div class="card" style="left:3888px;top:1928px;width:460px"><div class="tx" style="left:13px;top:24.0px;font-size:50px;line-height:50px;letter-spacing:2.0px;color:#232323">13:00 - 22:00</div><div class="tx" style="left:12px;top:99.7px;font-size:50px;line-height:50px;letter-spacing:1.5px;color:#232323;-webkit-text-stroke:2px #232323">Leana Plass</div></div>
<div class="card" style="left:3888px;top:2132px;width:460px"><div class="tx" style="left:13px;top:24.0px;font-size:50px;line-height:50px;letter-spacing:2.0px;color:#232323">17:30 - 23:00</div><div class="tx" style="left:12px;top:99.7px;font-size:50px;line-height:50px;letter-spacing:1.5px;color:#232323;-webkit-text-stroke:2px #232323">Emmely Gens</div></div>
<div class="card" style="left:3888px;top:2336px;width:460px"><div class="tx" style="left:13px;top:24.0px;font-size:50px;line-height:50px;letter-spacing:2.0px;color:#232323">20:00 - 23:00</div><div class="tx" style="left:12px;top:99.7px;font-size:50px;line-height:50px;letter-spacing:1.5px;color:#232323;-webkit-text-stroke:2px #232323">Titus Müller</div></div>
<svg class="abs" style="left:4368px;top:908px" width="460" height="184" viewBox="0 0 460 184"><rect x="2" y="2" width="456" height="180" rx="22" ry="22" fill="none" stroke="#47a0ac" stroke-width="4" stroke-dasharray="12 8" stroke-dashoffset="-4"/></svg>
<div class="tx" style="left:4383.7px;top:936.0px;font-size:49px;line-height:49px;letter-spacing:1.1px;color:#47a0ac">Neue Schicht</div>
<svg class="abs" style="left:4388px;top:1016px" width="40" height="40" viewBox="0 0 40 40"><path d="M20,1 V39 M1,20 H39" stroke="#47a0ac" stroke-width="4"/></svg>
<div class="card" style="left:4368px;top:1112px;width:460px"><div class="tx" style="left:13px;top:24.0px;font-size:50px;line-height:50px;letter-spacing:2.0px;color:#232323">08:00 - 14:00</div><div class="tx" style="left:12px;top:99.7px;font-size:50px;line-height:50px;letter-spacing:1.5px;color:#232323;-webkit-text-stroke:2px #232323">Muhammed Gr...</div></div>
<div class="card" style="left:4368px;top:1316px;width:460px"><div class="tx" style="left:13px;top:24.0px;font-size:50px;line-height:50px;letter-spacing:2.0px;color:#232323">09:00 - 15:00</div><div class="tx" style="left:12px;top:99.7px;font-size:50px;line-height:50px;letter-spacing:1.5px;color:#232323;-webkit-text-stroke:2px #232323">Titus Müller</div></div>
<div class="card" style="left:4368px;top:1520px;width:460px"><div class="tx" style="left:13px;top:24.0px;font-size:50px;line-height:50px;letter-spacing:2.0px;color:#232323">11:00 - 17:00</div><div class="tx" style="left:12px;top:99.7px;font-size:50px;line-height:50px;letter-spacing:1.5px;color:#232323;-webkit-text-stroke:2px #232323">Lennox Vielleh...</div></div>
<div class="card" style="left:4368px;top:1724px;width:460px"><div class="tx" style="left:13px;top:24.0px;font-size:50px;line-height:50px;letter-spacing:2.0px;color:#232323">11:00 - 17:00</div><div class="tx" style="left:12px;top:99.7px;font-size:50px;line-height:50px;letter-spacing:1.5px;color:#232323;-webkit-text-stroke:2px #232323">Stina Bickel</div></div>
<div class="card" style="left:4368px;top:1928px;width:460px"><div class="tx" style="left:13px;top:24.0px;font-size:50px;line-height:50px;letter-spacing:2.0px;color:#232323">11:00 - 16:15</div><div class="tx" style="left:12px;top:99.7px;font-size:50px;line-height:50px;letter-spacing:1.5px;color:#232323;-webkit-text-stroke:2px #232323">Tina Hommel</div></div>
<div class="card" style="left:4368px;top:2132px;width:460px"><div class="tx" style="left:13px;top:24.0px;font-size:50px;line-height:50px;letter-spacing:2.0px;color:#232323">16:30 - 23:00</div><div class="tx" style="left:12px;top:99.7px;font-size:50px;line-height:50px;letter-spacing:1.5px;color:#232323;-webkit-text-stroke:2px #232323">Amalia Reichardt</div></div>
<div class="card" style="left:4368px;top:2336px;width:460px"><div class="tx" style="left:13px;top:24.0px;font-size:50px;line-height:50px;letter-spacing:2.0px;color:#232323">17:00 - 23:00</div><div class="tx" style="left:12px;top:99.7px;font-size:50px;line-height:50px;letter-spacing:1.5px;color:#232323;-webkit-text-stroke:2px #232323">Lilly Schöckel</div></div>
<div class="abs" style="left:-440px;top:0;width:472px;height:728px;background:linear-gradient(90deg,rgba(71,160,172,0) 0%,rgba(71,160,172,0.012) 80%,rgba(71,160,172,0.03) 93.2%,rgba(71,160,172,0.1) 96.6%,rgba(71,160,172,0.4) 100%)"></div>
<div class="abs" style="left:-440px;top:888px;width:472px;height:1559px;background:linear-gradient(90deg,rgba(71,160,172,0) 0%,rgba(71,160,172,0.012) 80%,rgba(71,160,172,0.03) 93.2%,rgba(71,160,172,0.1) 96.6%,rgba(71,160,172,0.4) 100%)"></div>
<div class="abs" style="left:32px;top:0;width:4px;height:728px;background:#47a0ac"></div>
<div class="abs" style="left:32px;top:888px;width:4px;height:1559px;background:#47a0ac"></div>
<div class="abs" style="left:2920px;top:0;width:472px;height:728px;background:linear-gradient(90deg,rgba(71,160,172,0) 0%,rgba(71,160,172,0.012) 80%,rgba(71,160,172,0.03) 93.2%,rgba(71,160,172,0.1) 96.6%,rgba(71,160,172,0.4) 100%)"></div>
<div class="abs" style="left:2920px;top:888px;width:472px;height:1559px;background:linear-gradient(90deg,rgba(71,160,172,0) 0%,rgba(71,160,172,0.012) 80%,rgba(71,160,172,0.03) 93.2%,rgba(71,160,172,0.1) 96.6%,rgba(71,160,172,0.4) 100%)"></div>
<div class="abs" style="left:3392px;top:0;width:4px;height:728px;background:#47a0ac"></div>
<div class="abs" style="left:3392px;top:888px;width:4px;height:1559px;background:#47a0ac"></div>
</div>
<div class="abs" style="left:4600px;top:244px;width:48px;height:870px;background:#b1b1b1"></div>
<div class="abs" style="left:2022px;top:2692px;width:1324px;height:48px;background:#b1b1b1"></div>
</body></html>
